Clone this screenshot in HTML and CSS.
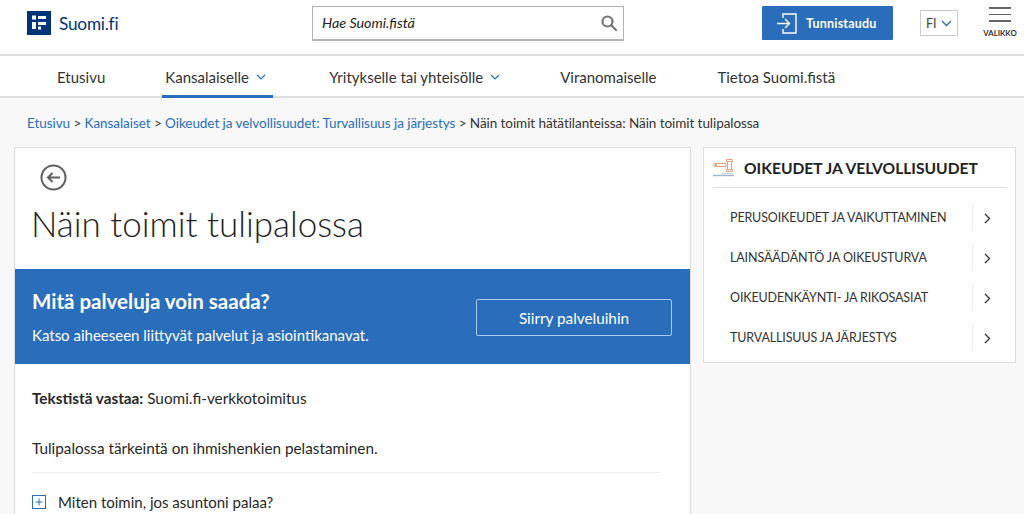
FILE: index.html
```html
<!DOCTYPE html>
<html lang="fi">
<head>
<meta charset="utf-8">
<title>Näin toimit tulipalossa</title>
<link rel="stylesheet" href="styles.css">
</head>
<body>
<header class="top">
  <a class="brand">
    <svg class="brand-icon" width="24" height="24" viewBox="0 0 24 24"><rect width="24" height="24" fill="#003479"/><rect x="5" y="4.500" width="4" height="4" fill="#fff"/><rect x="5" y="11" width="4" height="7" fill="#fff"/><rect x="11" y="5" width="8" height="3" fill="#fff"/><rect x="11" y="11" width="8" height="3" fill="#fff"/><rect x="11" y="15.500" width="3" height="3" fill="#fff"/></svg>
    <span class="brand-name">Suomi.fi</span>
  </a>
  <div class="search">
    <span class="search-text">Hae Suomi.fistä</span>
    <svg width="16" height="16" viewBox="0 0 16 16" fill="none" stroke="#757575" stroke-width="2.2"><circle cx="6.500" cy="6.500" r="5"/><path d="M10.300 10.300L15 15" stroke-linecap="round"/></svg>
  </div>
  <a class="login">
    <svg width="21" height="21" viewBox="0 0 21 21" fill="none" stroke="#fff" stroke-width="1.400"><path d="M6 5V1h13v19H6v-4"/><path d="M0 10.500h12M8 6l4.500 4.500L8 15"/></svg>
    <span>Tunnistaudu</span>
  </a>
  <div class="lang">
    <span>FI</span>
    <svg width="11" height="7" viewBox="0 0 11 7" fill="none" stroke="#2a6ebb" stroke-width="1.300"><path d="M1 1l4.500 4.500L10 1"/></svg>
  </div>
  <div class="menu">
    <span class="bars"><i></i><i></i><i></i></span>
    <span class="menu-label">VALIKKO</span>
  </div>
</header>
<nav class="nav">
  <a class="nav-item n1">Etusivu</a>
  <a class="nav-item n2 active">Kansalaiselle
    <svg width="10" height="6" viewBox="0 0 10 6" fill="none" stroke="#2a6ebb" stroke-width="1.200"><path d="M1 1l4 4 4-4"/></svg></a>
  <a class="nav-item n3">Yritykselle tai yhteisölle
    <svg width="10" height="6" viewBox="0 0 10 6" fill="none" stroke="#2a6ebb" stroke-width="1.200"><path d="M1 1l4 4 4-4"/></svg></a>
  <a class="nav-item n4">Viranomaiselle</a>
  <a class="nav-item n5">Tietoa Suomi.fistä</a>
</nav>
<div class="crumbs"><a>Etusivu</a> &gt; <a>Kansalaiset</a> &gt; <a>Oikeudet ja velvollisuudet: Turvallisuus ja järjestys</a> &gt; Näin toimit hätätilanteissa: Näin toimit tulipalossa</div>
<div class="columns">
  <main class="article">
    <svg class="back" width="27" height="27" viewBox="0 0 27 27" fill="none" stroke="#5f5f5f"><circle cx="13.500" cy="13.500" r="12" stroke-width="2"/><path d="M20 13.500H8M12.500 9l-4.500 4.500 4.500 4.500" stroke-width="2"/></svg>
    <h1>Näin toimit tulipalossa</h1>
    <section class="promo">
      <div>
        <h2>Mitä palveluja voin saada?</h2>
        <p>Katso aiheeseen liittyvät palvelut ja asiointikanavat.</p>
      </div>
      <a class="promo-btn">Siirry palveluihin</a>
    </section>
    <div class="body">
      <p class="byline"><b>Tekstistä vastaa:</b> Suomi.fi-verkkotoimitus</p>
      <p class="lead">Tulipalossa tärkeintä on ihmishenkien pelastaminen.</p>
      <div class="acc">
        <svg width="14" height="14" viewBox="0 0 14 14" fill="none" stroke="#2a6ebb"><rect x=".5" y=".5" width="13" height="13"/><path d="M7 3.500v7M3.500 7h7"/></svg>
        <span>Miten toimin, jos asuntoni palaa?</span>
      </div>
    </div>
  </main>
  <aside class="side">
    <div class="side-head">
      <svg width="22" height="18" viewBox="0 0 22 18" fill="none" stroke="#e8a27a"><path d="M2.500 4.500H13v3H2.500z"/><circle cx="2" cy="6" r="1.500"/><path d="M14.500 2.500h4v8h-4zM13.500 .5h6v2h-6zM13.500 10.500h6v2h-6z"/><path d="M0 16.500h21" stroke="#9db7d5" stroke-width="1.500"/><path d="M9 14.500h11" stroke="#c9d6e5" stroke-width="1.500"/></svg>
      <h3>OIKEUDET JA VELVOLLISUUDET</h3>
    </div>
    <ul class="side-list">
      <li><span>PERUSOIKEUDET JA VAIKUTTAMINEN</span><b><svg width="7" height="11" viewBox="0 0 7 11" fill="none" stroke="#333" stroke-width="1.300"><path d="M1 1l4.500 4.500L1 10"/></svg></b></li>
      <li><span>LAINSÄÄDÄNTÖ JA OIKEUSTURVA</span><b><svg width="7" height="11" viewBox="0 0 7 11" fill="none" stroke="#333" stroke-width="1.300"><path d="M1 1l4.500 4.500L1 10"/></svg></b></li>
      <li><span>OIKEUDENKÄYNTI- JA RIKOSASIAT</span><b><svg width="7" height="11" viewBox="0 0 7 11" fill="none" stroke="#333" stroke-width="1.300"><path d="M1 1l4.500 4.500L1 10"/></svg></b></li>
      <li><span>TURVALLISUUS JA JÄRJESTYS</span><b><svg width="7" height="11" viewBox="0 0 7 11" fill="none" stroke="#333" stroke-width="1.300"><path d="M1 1l4.500 4.500L1 10"/></svg></b></li>
    </ul>
  </aside>
</div>
</body>
</html>
```
FILE: styles.css
```css
* { box-sizing: border-box; }
html, body { margin: 0; height: 514px; overflow: hidden; }
body { background: #f8f8f8; font-family: "Lato", "Liberation Sans", sans-serif; color: #282828; font-size: 15px; }
a { color: inherit; text-decoration: none; }
.top { height: 56px; background: #fff; border-bottom: 2px solid #dedede; display: flex; align-items: center; }
.brand { display: flex; align-items: center; margin-left: 27px; margin-top: -8px; width: 285px; gap: 8px; height: 46px; }
.brand-name { font-size: 17.200px; color: #003479; letter-spacing: -.2px; }
.search { width: 312px; height: 35px; margin-top: -8px; border: 1px solid #b5b5b5; border-bottom-width: 2px; display: flex; align-items: center; justify-content: space-between; padding: 0 6px 0 9px; }
.search-text { font-style: italic; font-size: 14.300px; color: #222; }
.login { margin-left: 138px; margin-top: -8px; width: 131px; height: 34px; background: #2a6ebb; color: #fff; display: flex; align-items: center; gap: 8px; padding-left: 15px; font-size: 12.500px; font-weight: 700; letter-spacing: .2px; border-radius: 1px; }
.lang { margin-left: 27px; margin-top: -8px; width: 38px; height: 26px; border: 1px solid #ccc; display: flex; align-items: center; justify-content: space-between; padding: 0 5px; font-size: 12.500px; color: #444; }
.menu { margin-left: 25px; margin-top: -9px; width: 34px; display: flex; flex-direction: column; align-items: center; gap: 6px; }
.bars { display: flex; flex-direction: column; gap: 5px; width: 22px; }
.bars i { display: block; height: 1.500px; background: #666; }
.menu-label { font-size: 7.800px; font-weight: 700; color: #333; }
.nav { height: 42px; background: #fff; border-bottom: 2px solid #dedede; display: flex; font-size: 15px; color: #333; }
.nav-item { display: flex; align-items: center; gap: 7px; height: 42px; }
.n1 { margin-left: 57px; }
.n2 { margin-left: 57px; padding: 3px 5px 0 3px; width: 111px; }
.active { border-bottom: 3px solid #2a6ebb; }
.n3 { margin-left: 56px; }
.n4 { margin-left: 60px; }
.n5 { margin-left: 61px; }
.crumbs { height: 49px; padding: 16px 0 0 27px; font-size: 13.500px; letter-spacing: -.06px; color: #333; line-height: 18px; }
.crumbs a { color: #2a6ebb; }
.columns { display: flex; align-items: flex-start; padding-left: 14px; gap: 12px; }
.article { width: 677px; height: 400px; background: #fff; border: 1px solid #ddd; flex: none; }
.back { display: block; margin: 16px 0 0 25px; }
h1 { margin: 0; padding: 7px 0 0 16px; font-size: 35px; font-weight: 300; line-height: 50px; height: 78px; color: #222; }
.promo { height: 95px; background: #2a6ebb; color: #fff; display: flex; align-items: center; justify-content: space-between; padding: 0 18px 0 17px; }
.promo h2 { margin: 0 0 11px; font-size: 20.500px; font-weight: 700; line-height: 26px; }
.promo p { margin: 0; font-size: 15px; line-height: 20px; }
.promo-btn { width: 196px; height: 37px; border: 1px solid #a9cdf2; border-radius: 2px; display: flex; align-items: center; justify-content: center; font-size: 15.300px; margin-top: 2px; }
.body { padding: 0 30px 0 17px; }
.byline { margin: 0; padding-top: 24px; line-height: 20px; font-size: 15.300px; }
.lead { margin: 0; padding: 30px 0 14px; line-height: 20px; border-bottom: 1px solid #eee; font-size: 15.300px; }
.acc { display: flex; align-items: center; gap: 12px; padding-top: 19px; font-size: 15px; line-height: 20px; }
.side { width: 313px; height: 216px; background: #fff; border: 1px solid #ddd; flex: none; padding: 0 8px 0 9px; }
.side-head { display: flex; align-items: center; gap: 9px; height: 40px; padding-top: 0; border-bottom: 1px solid #ddd; }
h3 { margin: 0; font-size: 15.600px; font-weight: 700; color: #222; }
.side-list { list-style: none; margin: 9px 0 0; padding: 0; }
.side-list li { display: flex; align-items: center; height: 40px; justify-content: space-between; padding-left: 17px; font-size: 12.500px; letter-spacing: -.13px; color: #333; }
.side-list b { width: 35px; height: 26px; border-left: 1px solid #eee; display: flex; align-items: center; padding: 3px 0 0 11px; }
```
